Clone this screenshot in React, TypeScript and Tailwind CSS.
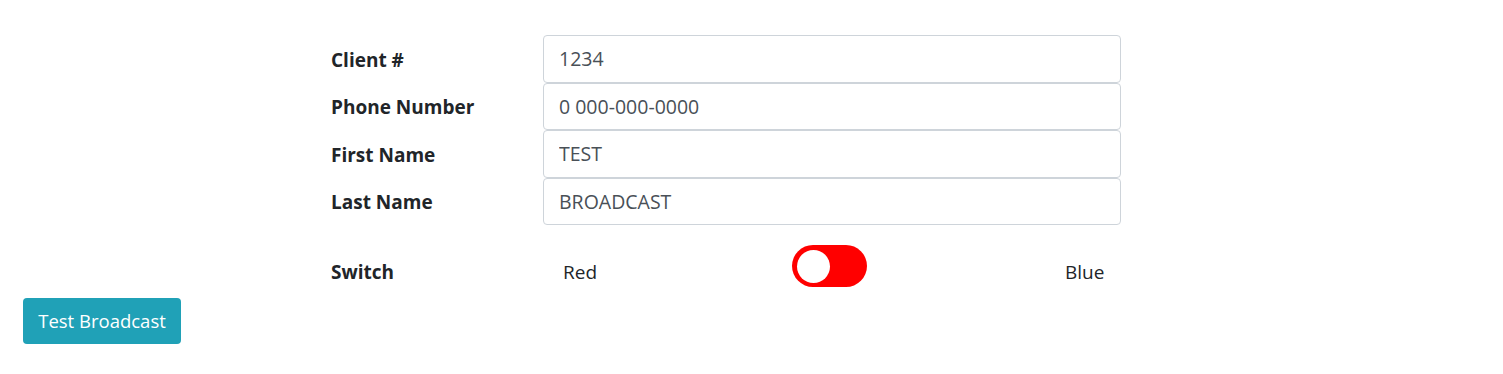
import React from 'react';

const FIELDS = [
    { label: "Client #", value: "1234" },
    { label: "Phone Number", value: "0 000-000-0000" },
    { label: "First Name", value: "TEST" },
    { label: "Last Name", value: "BROADCAST" },
];

const App: React.FC = () => {
    return (
        <div className="w-[1503px] h-[374px] bg-white font-['Open_Sans',sans-serif] text-[#212529]">
            <div className="pt-[35px] pl-[331px]">
                {FIELDS.map(field => (
                    <div key={field.label} className="flex items-center">
                        <label className="w-[212px] pt-[2px] text-[19px] font-bold">{field.label}</label>
                        <input
                            readOnly
                            value={field.value}
                            className="w-[578px] h-[47.5px] px-[15px] text-[19.5px] text-[#495057] border border-[#ced4da] rounded-[4px] outline-none"
                        />
                    </div>
                ))}
                <div className="flex items-center mt-[20px] h-[42px]">
                    <span className="w-[232px] pt-[12px] text-[19px] font-bold">Switch</span>
                    <span className="w-[229px] pt-[12px] text-[19px]">Red</span>
                    <div className="w-[75px] h-[42px] rounded-full bg-[#ff0000] flex items-center pl-[5px]">
                        <div className="w-[33px] h-[33px] rounded-full bg-white" />
                    </div>
                    <span className="ml-[198px] pt-[12px] text-[19px]">Blue</span>
                </div>
            </div>
            <div className="pl-[23px] mt-[11px]">
                <button className="h-[46px] w-[158px] bg-[#20a1b7] text-white text-[18.5px] rounded-[4px]">
                    Test Broadcast
                </button>
            </div>
        </div>
    );
};

export default App;
